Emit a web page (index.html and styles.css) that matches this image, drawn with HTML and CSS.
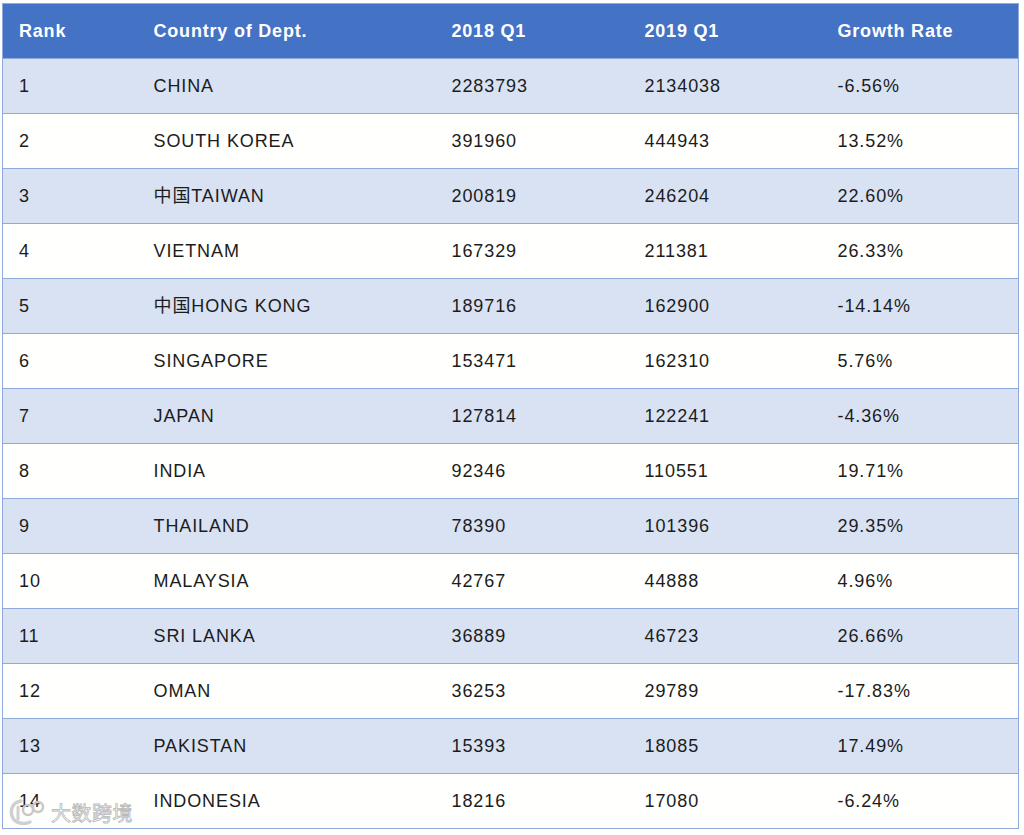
FILE: index.html
```html
<!DOCTYPE html>
<html lang="en">
<head>
<meta charset="utf-8">
<title>Table</title>
<link rel="stylesheet" href="styles.css">
</head>
<body>
<div class="wrap">
<table class="data">
  <colgroup>
    <col class="c1"><col class="c2"><col class="c3"><col class="c4"><col class="c5">
  </colgroup>
  <thead>
    <tr><th>Rank</th><th>Country of Dept.</th><th>2018 Q1</th><th>2019 Q1</th><th>Growth Rate</th></tr>
  </thead>
  <tbody>
    <tr><td>1</td><td>CHINA</td><td>2283793</td><td>2134038</td><td>-6.56%</td></tr>
    <tr><td>2</td><td>SOUTH KOREA</td><td>391960</td><td>444943</td><td>13.52%</td></tr>
    <tr><td>3</td><td>中国TAIWAN</td><td>200819</td><td>246204</td><td>22.60%</td></tr>
    <tr><td>4</td><td>VIETNAM</td><td>167329</td><td>211381</td><td>26.33%</td></tr>
    <tr><td>5</td><td>中国HONG KONG</td><td>189716</td><td>162900</td><td>-14.14%</td></tr>
    <tr><td>6</td><td>SINGAPORE</td><td>153471</td><td>162310</td><td>5.76%</td></tr>
    <tr><td>7</td><td>JAPAN</td><td>127814</td><td>122241</td><td>-4.36%</td></tr>
    <tr><td>8</td><td>INDIA</td><td>92346</td><td>110551</td><td>19.71%</td></tr>
    <tr><td>9</td><td>THAILAND</td><td>78390</td><td>101396</td><td>29.35%</td></tr>
    <tr><td>10</td><td>MALAYSIA</td><td>42767</td><td>44888</td><td>4.96%</td></tr>
    <tr><td>11</td><td>SRI LANKA</td><td>36889</td><td>46723</td><td>26.66%</td></tr>
    <tr><td>12</td><td>OMAN</td><td>36253</td><td>29789</td><td>-17.83%</td></tr>
    <tr><td>13</td><td>PAKISTAN</td><td>15393</td><td>18085</td><td>17.49%</td></tr>
    <tr><td>14</td><td>INDONESIA</td><td>18216</td><td>17080</td><td>-6.24%</td></tr>
  </tbody>
</table>
<div class="watermark">
  <svg class="wm-logo" width="38" height="30" viewBox="0 0 38 30">
    <path d="M13 4 C5 5 2 12 4 19 C6 26 15 28 22 25" fill="none" stroke="#d0d0d0" stroke-width="3.5" stroke-linecap="round"/>
    <path d="M10 10 L10 22" fill="none" stroke="#d0d0d0" stroke-width="3" stroke-linecap="round"/>
    <circle cx="20" cy="13" r="5" fill="none" stroke="#c8c8c8" stroke-width="2.5"/>
    <circle cx="30" cy="10" r="5" fill="none" stroke="#c8c8c8" stroke-width="2.5"/>
  </svg>
  <span class="wm-text">大数跨境</span>
</div>
</div>
</body>
</html>
```

FILE: styles.css
```css
html, body {
  margin: 0;
  padding: 0;
  background: #ffffff;
}
.wrap {
  position: relative;
  padding: 3px 0 0 2px;
}
.data {
  border-collapse: collapse;
  width: 1016px;
  table-layout: fixed;
  font-family: "Liberation Sans", Arial, "Noto Sans CJK SC", sans-serif;
  font-size: 18px;
  line-height: 20px;
  letter-spacing: 0.9px;
  color: #1c1c1c;
  border: 1px solid #8eaadb;
}
.c1 { width: 135px; }
.c2 { width: 298px; }
.c3 { width: 193px; }
.c4 { width: 193px; }
.c5 { width: 197px; }
.data th {
  background: #4472c4;
  color: #ffffff;
  font-weight: bold;
  letter-spacing: 0.8px;
  text-align: left;
  height: 54px;
  padding: 0 0 0 16px;
  border-bottom: 1px solid #8eaadb;
}
.data td {
  height: 54px;
  padding: 0 0 0 16px;
  border-bottom: 1px solid #8eaadb;
}
.data tbody tr:nth-child(odd) td {
  background: #d9e2f3;
}
.data tbody tr:nth-child(even) td {
  background: #fffffd;
}
.watermark {
  position: absolute;
  left: 8px;
  top: 797px;
  display: flex;
  align-items: center;
  gap: 5px;
}
.wm-text {
  font-family: "Noto Sans CJK SC", sans-serif;
  font-size: 20px;
  color: rgba(255, 255, 255, 0.85);
  -webkit-text-stroke: 0.8px #b8b8b8;
  letter-spacing: 0.5px;
}
```
